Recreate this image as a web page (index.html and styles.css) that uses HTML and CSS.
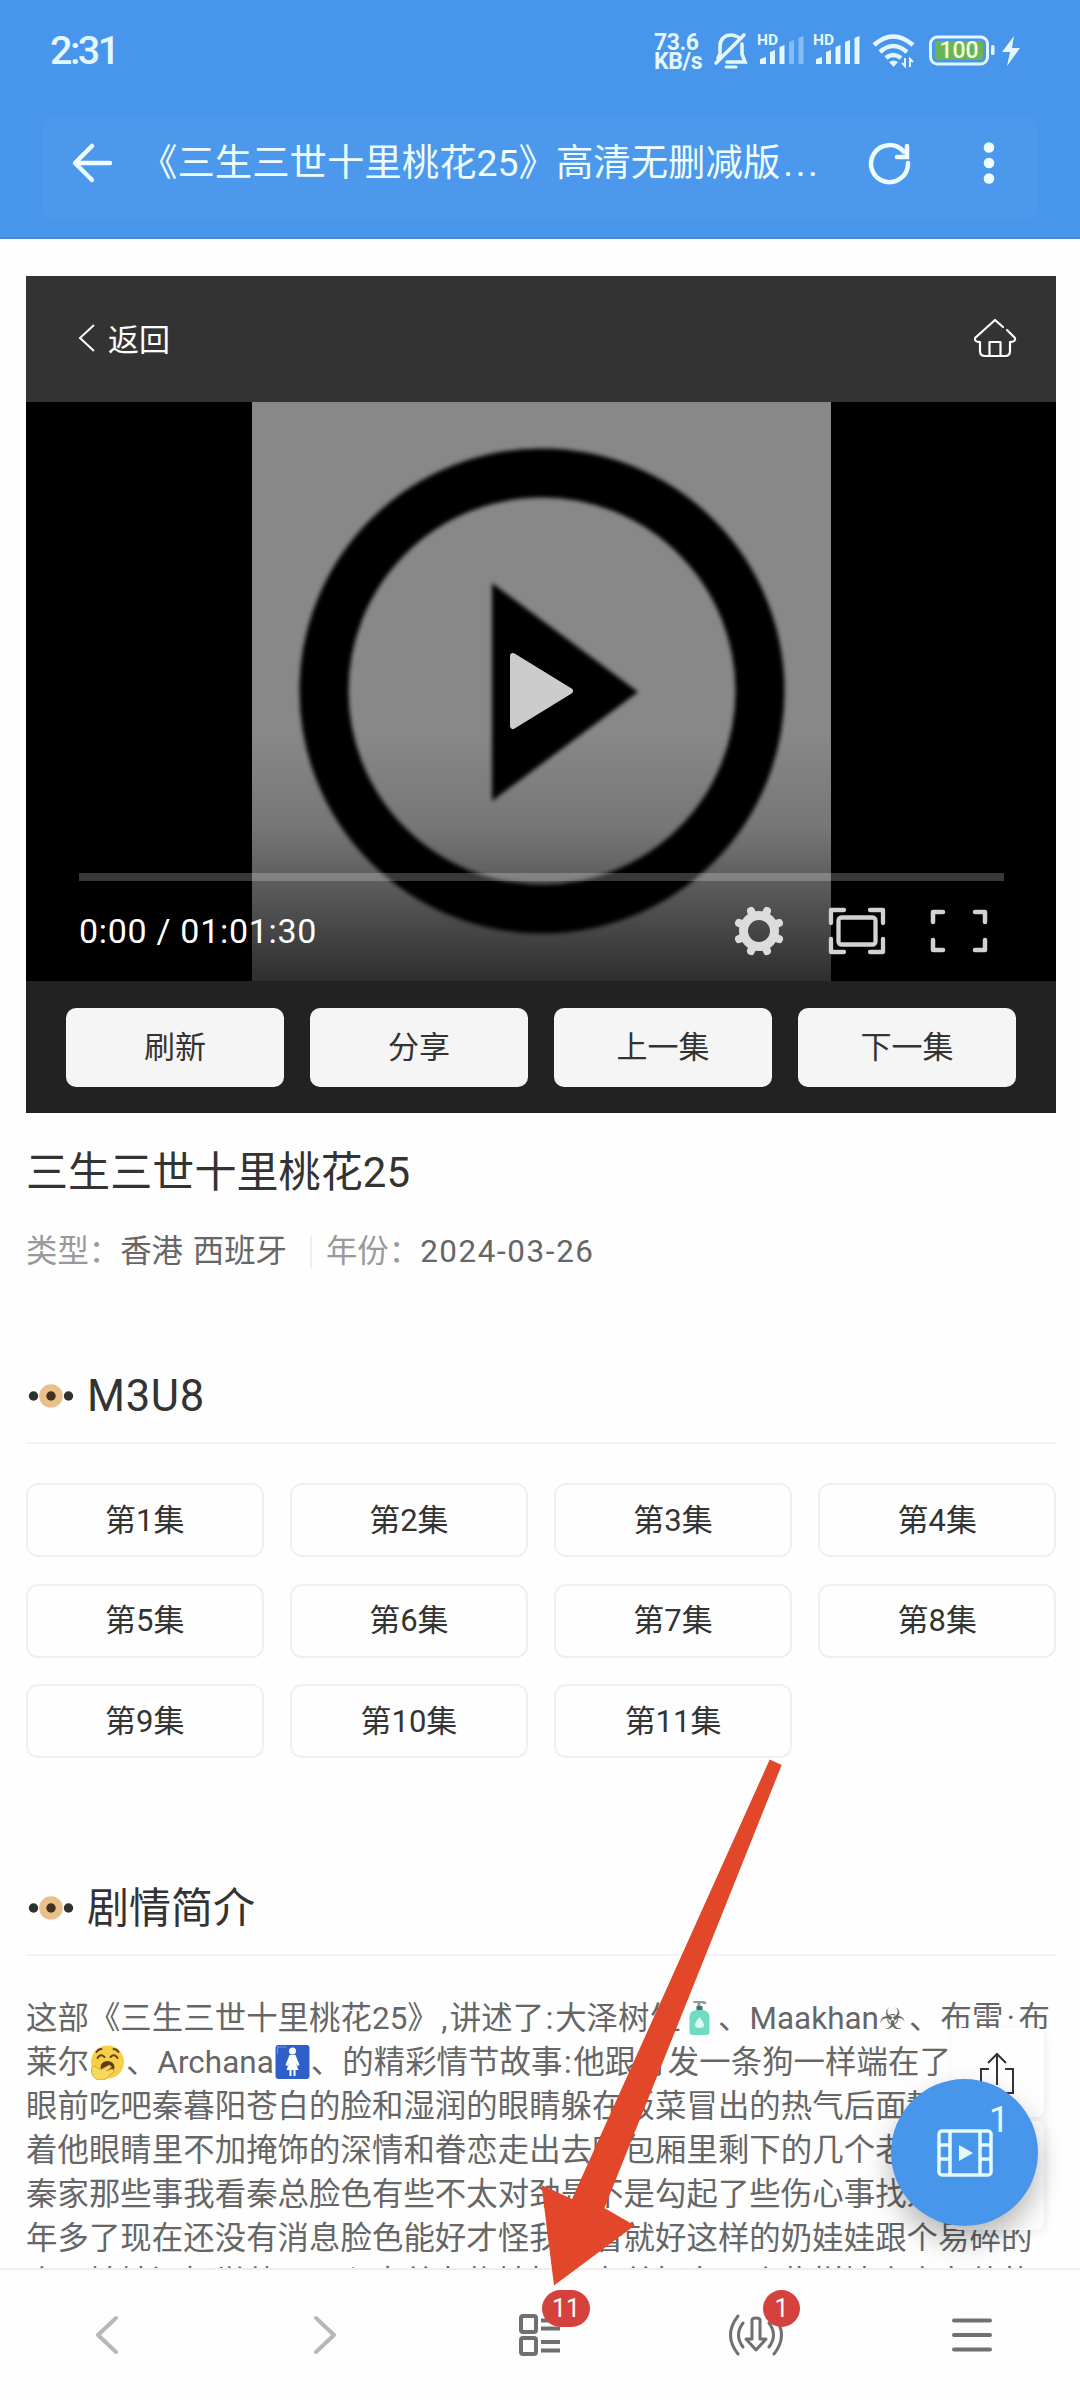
FILE: index.html
```html
<!DOCTYPE html>
<html lang="zh-CN">
<head>
<meta charset="utf-8">
<title>三生三世十里桃花25</title>
<link rel="stylesheet" href="styles.css">
</head>
<body>
<div class="screen">
  <header class="top">
    <div class="status">
      <span class="clock">2:31</span>
      <div class="speed"><span>73.6</span><span>KB/s</span></div>
      <svg class="st-bell" width="36" height="38" viewBox="0 0 36 38" fill="none" stroke="#e4f7ff" stroke-width="3.6" stroke-linecap="round"><path d="M7 22V14C7 7 12 3 18 3c3 0 5 1 7 2M29 12v10l3 8H14M3 31L31 3M7 22l-2 4"/><path d="M13 35h10" stroke-width="3"/></svg>
      <svg class="st-sim" width="48" height="34" viewBox="0 0 48 34" fill="#e4f7ff"><text x="0" y="13" class="hd">HD</text><path d="M3 32v-5l6-2v7zM13 32V20l5-2v14zM22.500 32V15l5-2v19z"/><path opacity=".4" d="M32 32V10l5-2v24zM41.500 32V6l5-2v28z"/></svg>
      <svg class="st-sim" width="48" height="34" viewBox="0 0 48 34" fill="#e4f7ff"><text x="0" y="13" class="hd">HD</text><path d="M3 32v-5l6-2v7zM13 32V20l5-2v14zM22.500 32V15l5-2v19zM32 32V10l5-2v24zM41.500 32V6l5-2v28z"/></svg>
      <svg class="st-wifi" width="44" height="36" viewBox="0 0 44 36" fill="none" stroke="#e4f7ff" stroke-width="4.500"><path d="M2 12Q21-5 41 12M8 19Q21 7 35 19M14 25Q21 19 29 25"/><path d="M17 29q4.500-3 9 0l-4.500 5z" fill="#e4f7ff" stroke="none"/><path d="M33 25v8l-3-3M38 34v-8l3 3" stroke-width="2"/></svg>
      <svg class="st-batt" width="67" height="32" viewBox="0 0 67 32"><rect x="1.500" y="2" width="57" height="27" rx="7" fill="none" stroke="#e4f7ff" stroke-width="3"/><rect x="6" y="6" width="48" height="19" rx="3" fill="#69b457"/><rect x="62" y="10" width="3.500" height="10" rx="1.500" fill="#e4f7ff"/><text x="30" y="23" class="pct">100</text></svg>
      <svg class="st-bolt" width="18" height="30" viewBox="0 0 18 30" fill="#e4f7ff"><path d="M12 0L0 16h8L5 30 18 12h-8z"/></svg>
    </div>
    <div class="address">
      <svg class="ad-back" width="42" height="42" viewBox="0 0 42 42" fill="none" stroke="#eefdff" stroke-width="4.500" stroke-linecap="round" stroke-linejoin="round"><path d="M21 4L4 21l17 17M5 21h34"/></svg>
      <span class="ad-title">《三生三世十里桃花25》高清无删减版<span class="more">...</span></span>
      <svg class="ad-reload" width="44" height="44" viewBox="0 0 44 44" fill="none" stroke="#eefdff" stroke-width="4.500" stroke-linecap="round"><path d="M40 22A18.500 18.500 0 1 1 35.500 10.500M39 5v11H29"/></svg>
      <svg class="ad-dots" width="12" height="44" viewBox="0 0 12 44" fill="#eefdff"><circle cx="6" cy="6.500" r="5.300"/><circle cx="6" cy="22" r="5.300"/><circle cx="6" cy="37.500" r="5.300"/></svg>
    </div>
  </header>

  <main class="page">
    <section class="player">
      <div class="player-head">
        <div class="back"><svg width="20" height="30" viewBox="0 0 20 30" fill="none" stroke="#fff" stroke-width="2"><path d="M17 2L3 15l14 13"/></svg><span>返回</span></div>
        <svg width="44" height="40" viewBox="0 0 44 40" fill="none" stroke="#fff" stroke-width="2.200" stroke-linejoin="round" stroke-linecap="round"><path d="M30 9L22 2 2 20q-1 4 5 4v9q0 5 5 5h20q5 0 5-5v-9q6 0 5-4l-8-8"/><path d="M16.500 37V24h11v13"/></svg>
      </div>
      <div class="video">
        <div class="poster">
          <svg width="579" height="579" viewBox="0 0 579 579"><g class="soft"><circle cx="290" cy="289" r="218" fill="none" stroke="#000" stroke-width="49"/><path d="M240 181L386 290 240 399z"/></g></svg>
        </div>
        <div class="shade"></div>
        <svg class="big-play" width="66" height="78" viewBox="0 0 66 78"><path d="M4 4L61 39 4 74z" fill="#ccc" stroke="#ccc" stroke-width="6" stroke-linejoin="round"/></svg>
        <div class="controls">
          <div class="progress"></div>
          <div class="control-row">
            <span class="time">0:00 / 01:01:30</span>
            <svg width="50" height="50" viewBox="-25 -25 50 50"><circle r="15.500" fill="none" stroke="#dcdcdc" stroke-width="9"/><g stroke="#dcdcdc" stroke-width="8" stroke-linecap="round"><path d="M-8-20l1.500 4M8-20l-1.500 4M-8 20l1.500-4M8 20l-1.500-4M-20-8l4 1.500M-20 8l4-1.500M20-8l-4 1.500M20 8l-4-1.500"/></g></svg>
            <svg width="58" height="48" viewBox="0 0 58 48" fill="none" stroke="#d2d2d2" stroke-width="4.300" stroke-linecap="round" stroke-linejoin="round"><path d="M16 3H3v13M42 3h13v13M16 45H3V32M42 45h13V32"/><rect x="10.500" y="10.500" width="37" height="27" rx="3"/></svg>
            <svg width="58" height="44" viewBox="0 0 58 44" fill="none" stroke="#d2d2d2" stroke-width="4.500" stroke-linecap="round" stroke-linejoin="round"><path d="M13 3H3v10M45 3h10v10M13 41H3V31M45 41h10V31"/></svg>
          </div>
        </div>
      </div>
      <div class="toolbar"><button>刷新</button><button>分享</button><button>上一集</button><button>下一集</button></div>
    </section>

    <h1 class="title">三生三世十里桃花25</h1>
    <div class="meta"><span class="label">类型：</span><span class="region">香港 西班牙</span><i class="sep"></i><span class="label">年份：</span><span class="date">2024-03-26</span></div>

    <h2 class="section source"><svg class="eye" width="46" height="26" viewBox="0 0 46 26"><circle cx="5.500" cy="13" r="4.700" fill="#303030"/><circle cx="40.500" cy="13" r="4.700" fill="#303030"/><circle cx="23" cy="13" r="11.800" fill="#e9c08a"/><circle cx="23" cy="13" r="4.700" fill="#42301f"/></svg><span>M3U8</span></h2>
    <div class="episodes">
      <a>第1集</a><a>第2集</a><a>第3集</a><a>第4集</a>
      <a>第5集</a><a>第6集</a><a>第7集</a><a>第8集</a>
      <a>第9集</a><a>第10集</a><a>第11集</a>
    </div>

    <h2 class="section intro"><svg class="eye" width="46" height="26" viewBox="0 0 46 26"><circle cx="5.500" cy="13" r="4.700" fill="#303030"/><circle cx="40.500" cy="13" r="4.700" fill="#303030"/><circle cx="23" cy="13" r="11.800" fill="#e9c08a"/><circle cx="23" cy="13" r="4.700" fill="#42301f"/></svg><span>剧情简介</span></h2>
    <div class="story">
      <p>这部《三生三世十里桃花25》<span class="p">,</span>讲述了<span class="p">:</span>大泽树生<svg class="emoji" width="37" height="36" viewBox="0 0 36 36"><path d="M12 1h9q4 0 4 3h-4V3h-2v4h-3V3h-4z" fill="#8b9a96"/><path d="M15 6h6v5h-6z" fill="#44716a"/><path d="M8 17q0-6 7-7h6q7 1 7 7v15q0 3-3 3H11q-3 0-3-3z" fill="#71dac3"/><path d="M18 17q9 11 0 11t0-11" fill="#dffaf2"/></svg>、Maakhan<span class="bio">☣</span>、布雷<span class="dot">·</span>布</p>
      <p>莱尔<svg class="emoji" width="37" height="36" viewBox="0 0 36 36"><circle cx="18" cy="18" r="16.500" fill="#f5cf45"/><path d="M8 14q3-5 7-1M21 13q4-4 7 1M7 8q2-3 5-3M24 5q3 0 5 3" fill="none" stroke="#684019" stroke-width="2" stroke-linecap="round"/><ellipse cx="18" cy="23" rx="7" ry="6" fill="#613b20"/><path d="M2 24l3-2 6 4 9-5 2 2-5 4 6-2 2 3-5 3q-2 5-9 5-10-1-9-12" fill="#f9d85e" stroke="#d8a92f"/></svg>、Archana<svg class="emoji" width="37" height="36" viewBox="0 0 36 36"><rect x="1" y="1" width="34" height="34" rx="3" fill="#2f5fc9"/><path d="M3 10V3h9" fill="none" stroke="#6e96e8"/><circle cx="18" cy="7" r="3.500" fill="#fff"/><path d="M15 11h6l4 10-2 1-2-4 3 8h-3v6h-2v-6h-2v6h-2v-6h-3l3-8-2 4-2-1z" fill="#fff"/></svg>、的精彩情节故事<span class="p">:</span>他跟打发一条狗一样端在了秦暮阳</p>
      <p>眼前吃吧秦暮阳苍白的脸和湿润的眼睛躲在饭菜冒出的热气后面静静地看</p>
      <p>着他眼睛里不加掩饰的深情和眷恋走出去时包厢里剩下的几个老总谈起</p>
      <p>秦家那些事我看秦总脸色有些不太对劲是不是勾起了些伤心事找人都三</p>
      <p>年多了现在还没有消息脸色能好才怪我看着就好这样的奶娃娃跟个易碎的</p>
      <p>小不娃娃还好觉他了一心中总在物娃好了在总好在一个些样娃小小在他的</p>
    </div>
  </main>

  <nav class="bottom">
    <a><svg width="24" height="40" viewBox="0 0 24 40" fill="none" stroke="#b7b7b7" stroke-width="4" stroke-linecap="round" stroke-linejoin="round"><path d="M20 3L2 20l18 17"/></svg></a>
    <a><svg width="24" height="40" viewBox="0 0 24 40" fill="none" stroke="#b7b7b7" stroke-width="4" stroke-linecap="round" stroke-linejoin="round"><path d="M4 3l18 17L4 37"/></svg></a>
    <a><svg width="44" height="44" viewBox="0 0 44 44" fill="none" stroke="#707070" stroke-width="4"><rect x="3" y="3" width="15" height="16" rx="2"/><rect x="3" y="25" width="15" height="16" rx="2"/><path d="M23 7.500h19M23 15.500h19M23 29h19M23 37.500h19"/></svg><b class="badge wide">11</b></a>
    <a><svg width="56" height="44" viewBox="0 0 56 44" fill="none" stroke="#707070" stroke-width="3" stroke-linecap="round" stroke-linejoin="round"><path d="M10 3Q-5 22 10 41M15 10q-9 12 0 24M46 3q15 19 0 38M41 10q9 12 0 24M24 7q0-2 4-2t4 2v19h6L28 37 18 26h6z"/></svg><b class="badge">1</b></a>
    <a><svg width="42" height="36" viewBox="0 0 42 36" stroke="#707070" stroke-width="4" stroke-linecap="round"><path d="M3 3.500h36M3 18h36M3 32.500h36"/></svg></a>
  </nav>

  <div class="float-card share"><svg width="38" height="46" viewBox="0 0 38 46" fill="none" stroke="#333" stroke-width="2"><path d="M11 18H3v24h32V18h-8M19 34V3M10 12l9-9 9 9"/></svg></div>
  <div class="float-card lower"></div>
  <div class="fab">
    <svg width="56" height="48" viewBox="0 0 56 48" fill="none" stroke="#e4fbff" stroke-width="3.500"><rect x="2" y="2" width="52" height="44" rx="3"/><path d="M13 2v44M43 2v44M2 16h11M2 30h11M43 16h11M43 30h11"/><path d="M22 16l14 8-14 8z" fill="#e4fbff" stroke="none"/></svg>
    <span>1</span>
  </div>
  <svg class="pointer" width="96" height="528" viewBox="540 1758 96 528"><path d="M769.700 1759.600L781.700 1765 604.400 2208 634.700 2225.500 554 2285.500 541.500 2185 572 2199z" fill="#e14728"/></svg>
</div>
</body>
</html>
```
FILE: styles.css
```css
* { box-sizing: border-box; }
body { margin: 0; background: #fefefe; font-family: Roboto, "Noto Sans CJK SC", sans-serif; color: #333; }
svg { display: block; flex: none; }
.screen { position: relative; width: 1080px; height: 2400px; overflow: hidden; display: flex; flex-direction: column; }

.top { height: 239px; flex: none; background: #4895ec; border-bottom: 2px solid #5087c4; }
.status { height: 117px; padding: 32px 60px 0 50px; display: flex; align-items: flex-start; color: #e4f7ff; }
.clock { font-size: 39.500px; line-height: 38px; font-weight: 500; letter-spacing: -2.5px; margin-right: auto; }
.speed { width: 59px; padding-top: 1px; font-size: 23px; line-height: 19px; font-weight: 700; display: flex; flex-direction: column; white-space: nowrap; letter-spacing: -.4px; }
.st-bell { margin-right: 8px; }
.st-sim { margin-right: 8px; }
.st-wifi { margin: 1px 13px 0 3px; }
.st-batt { margin: 3px 6px 0 0; }
.st-bolt { margin-top: 4px; }
.hd { font-size: 15.500px; font-weight: 700; }
.pct { font-size: 23px; text-anchor: middle; fill: #f2ffdf; font-weight: 500; }
.address { height: 102px; margin: 0 42px; padding: 0 45px 10px 29px; border-radius: 12px; background: #4b98ec; display: flex; align-items: center; color: #eefdff; }
.ad-title { width: 670px; margin-left: 27px; font-size: 37.400px; line-height: 50px; white-space: nowrap; font-weight: 400; }
.more { margin-left: 3px; letter-spacing: 2.500px; }
.ad-reload { margin-left: 58px; margin-right: 71px; }

.page { flex: 1; min-height: 0; overflow: hidden; padding: 37px 24px 0 26px; }
.player { width: 1030px; background: #222; }
.player-head { height: 126px; background: #333; padding: 0 39px 2px 51px; display: flex; align-items: center; justify-content: space-between; }
.back { display: flex; align-items: center; gap: 11px; color: #fff; font-size: 31px; line-height: 40px; }
.back span { padding-top: 5px; }
.video { position: relative; height: 579px; background: #000; display: flex; flex-direction: column; justify-content: flex-end; }
.poster { position: absolute; left: 226px; top: 0; width: 579px; height: 579px; background: #888; }
.soft { filter: blur(2px); }
.shade { position: absolute; inset: 330px 0 0; background: linear-gradient(to bottom, rgba(0,0,0,0), rgba(0,0,0,.13) 38%, rgba(0,0,0,.66)); }
.big-play { position: absolute; left: 483px; top: 250px; }
.controls { position: relative; padding: 0 52px 0 53px; height: 108px; }
.progress { height: 8px; background: rgba(255,255,255,.22); }
.control-row { display: flex; align-items: center; height: 99px; padding: 0 16px 0 0; gap: 44px; }
.time { flex: 1; font-size: 34px; letter-spacing: .7px; color: #fff; white-space: nowrap; }
.toolbar { height: 132px; padding: 27px 40px 26px; display: grid; grid-template-columns: repeat(4, 1fr); gap: 26px; }
.toolbar button { border: 0; border-radius: 10px; background: #f5f5f5; color: #333; font: 31px/40px Roboto, "Noto Sans CJK SC", sans-serif; padding: 0; }

.title { margin: 34px 0 0; font-size: 42px; line-height: 52px; font-weight: 400; letter-spacing: .1px; }
.meta { margin-top: 33px; height: 40px; display: flex; align-items: center; font-size: 31.400px; line-height: 40px; color: #666; white-space: nowrap; }
.label { color: #999; }
.region { word-spacing: 2px; }
.sep { width: 2px; height: 32px; background: #eee; margin: 0 14px 0 23px; }
.date { letter-spacing: 1.600px; }
.section { margin: 0; display: flex; align-items: center; border-bottom: 2px solid #f4f4f4; font-size: 42px; font-weight: 400; line-height: 60px; }
.section span { margin-left: 13px; }
.eye { margin-left: 2px; }
.source { margin-top: 95px; padding-bottom: 17px; height: 77px; }
.source span { font-size: 43.500px; letter-spacing: .7px; padding-top: 2px; }
.episodes { margin-top: 39px; width: 1030px; display: grid; grid-template-columns: repeat(4, 237.5px); justify-content: space-between; grid-auto-rows: 74px; row-gap: 26.500px; }
.episodes a { border: 2px solid #f0f0f0; border-radius: 12px; display: flex; align-items: center; justify-content: center; font-size: 31px; line-height: 40px; padding-top: 1px; }
.intro { margin-top: 121px; height: 77px; padding-bottom: 17px; }
.intro span { padding-top: 2px; }
.story { padding-top: 41px; color: #666; font-size: 31.400px; letter-spacing: .06px; }
.story p { margin: 0; height: 44px; line-height: 44px; white-space: nowrap; }
.emoji { display: inline-block; vertical-align: -7px; }
.p { display: inline-block; width: 11px; text-align: center; }
.bio { display: inline-block; width: 30px; font: 30px/40px "DejaVu Sans", sans-serif; }
.dot { display: inline-block; width: 15px; text-align: center; }

.bottom { height: 132px; flex: none; background: #fdfdfd; border-top: 2px solid #eee; display: grid; grid-template-columns: repeat(5, 216px); position: relative; }
.bottom a { position: relative; display: flex; align-items: center; justify-content: center; }
.badge { position: absolute; left: 115px; top: 20px; width: 37px; height: 37px; border-radius: 19px; background: #d5423e; color: #fff; font-size: 25px; line-height: 37px; font-weight: 400; text-align: center; }
.badge.wide { left: 110px; width: 48px; }

.float-card { position: absolute; left: 951px; width: 93px; background: #fefefe; border-radius: 8px; box-shadow: 2px 2px 8px rgba(0,0,0,.07); }
.share { top: 2028px; height: 89px; padding: 23px 27px; }
.lower { top: 2121px; height: 109px; }
.fab { position: absolute; left: 891px; top: 2079px; width: 147px; height: 147px; border-radius: 50%; background: #4895ec; box-shadow: 0 14px 28px rgba(0,0,0,.28); display: flex; align-items: center; justify-content: center; }
.fab span { position: absolute; left: 98px; top: 21px; font-size: 36px; line-height: 40px; color: #e4fbff; }
.pointer { position: absolute; left: 540px; top: 1758px; overflow: visible; }
```
